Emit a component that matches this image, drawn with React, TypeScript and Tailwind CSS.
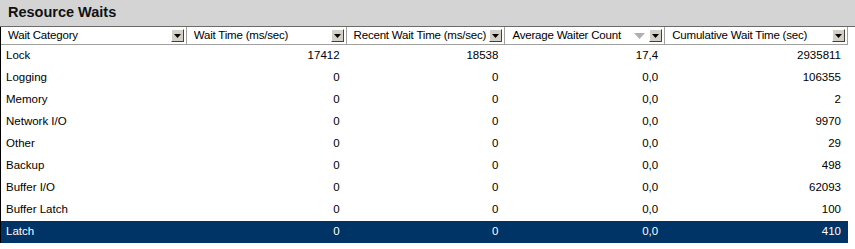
import React from 'react';

const rows = [
  ['Lock', '17412', '18538', '17,4', '2935811'],
  ['Logging', '0', '0', '0,0', '106355'],
  ['Memory', '0', '0', '0,0', '2'],
  ['Network I/O', '0', '0', '0,0', '9970'],
  ['Other', '0', '0', '0,0', '29'],
  ['Backup', '0', '0', '0,0', '498'],
  ['Buffer I/O', '0', '0', '0,0', '62093'],
  ['Buffer Latch', '0', '0', '0,0', '100'],
  ['Latch', '0', '0', '0,0', '410'],
];

const cols = [
  { label: 'Wait Category', w: 'w-[186px]' },
  { label: 'Wait Time (ms/sec)', w: 'w-[160px]' },
  { label: 'Recent Wait Time (ms/sec)', w: 'w-[159px]' },
  { label: 'Average Waiter Count', w: 'w-[160px]', sorted: true },
  { label: 'Cumulative Wait Time (sec)', w: 'w-[183px]' },
];

const DropButton = () => (
  <div className="w-[13px] h-[13px] bg-[#d4d0c8] border border-t-white border-l-white border-r-[#404040] border-b-[#404040] flex items-center justify-center shrink-0">
    <svg width="7" height="4" viewBox="0 0 7 4">
      <path d="M0 0h7L3.5 4z" fill="#000" />
    </svg>
  </div>
);

export default function App() {
  return (
    <div className="w-[855px] h-[249px] bg-white overflow-hidden font-['Liberation_Sans',Arial,sans-serif] text-[11.5px] text-black">
      <div className="h-[27px] bg-[#d4d4d4] border-b border-[#6b6b6b] flex items-center pl-[8px]">
        <span className="font-bold text-[14.5px] text-[#111]">Resource Waits</span>
      </div>
      <div className="w-[848px] border-l border-black">
        <div className="flex h-[18px] border-b border-[#a0a0a0]">
          {cols.map((c, i) => (
            <div key={i} className={`${c.w} flex items-center pl-[7px] pr-[2px] border-r border-[#a0a0a0] bg-white`}>
              <span className="flex-1 whitespace-nowrap overflow-hidden tracking-[-0.2px]">{c.label}</span>
              {c.sorted && (
                <svg width="11" height="6" viewBox="0 0 11 6" className="mr-[4px] shrink-0">
                  <path d="M0 0h11L5.5 6z" fill="#b0b0b0" />
                </svg>
              )}
              <DropButton />
            </div>
          ))}
        </div>
        {rows.map((r, i) => {
          const sel = i === rows.length - 1;
          return (
            <div key={i} className={`flex h-[22px] items-center ${sel ? 'bg-[#003366] text-white' : ''}`}>
              {r.map((v, j) => (
                <div key={j} className={`${cols[j].w} ${j === 0 ? 'pl-[5px] text-left' : 'pr-[7px] text-right'}`}>{v}</div>
              ))}
            </div>
          );
        })}
      </div>
    </div>
  );
}
